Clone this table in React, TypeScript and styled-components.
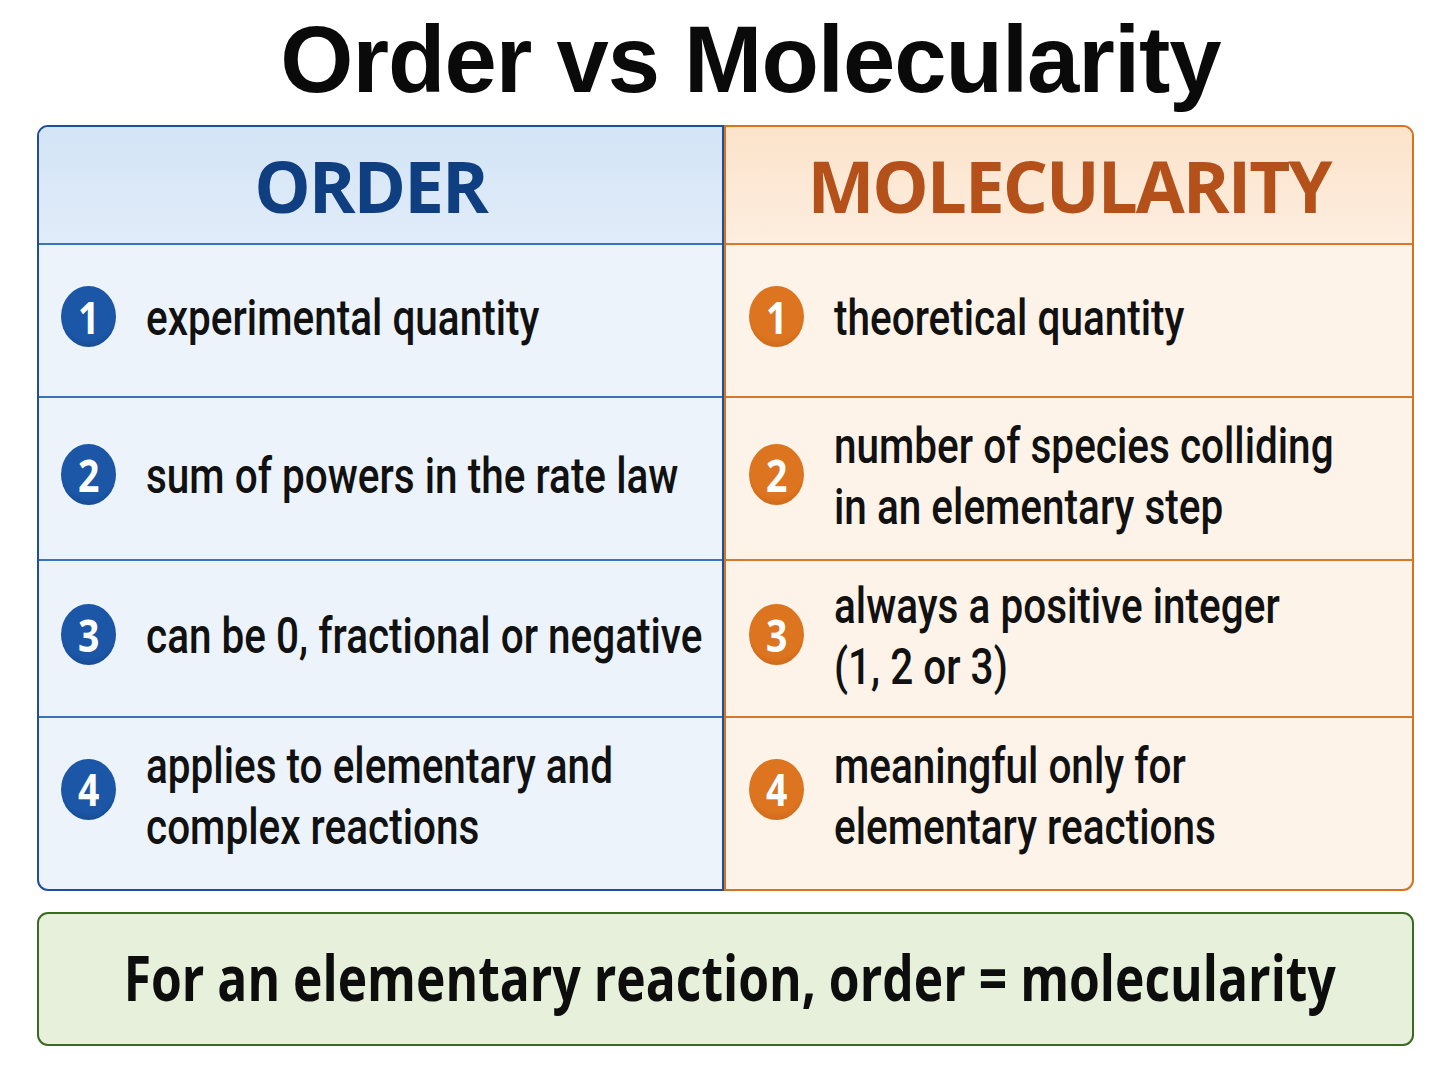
import styled, { createGlobalStyle } from 'styled-components';

const GlobalStyle = createGlobalStyle`
  html, body {
    margin: 0;
    padding: 0;
    background: #ffffff;
  }
  body {
    font-family: "Open Sans", "Liberation Sans", sans-serif;
    color: #111111;
  }
`;

const SANS = `"Open Sans", "Liberation Sans", sans-serif`;
const BODY = `Roboto, "Liberation Sans", sans-serif`;

type Side = 'order' | 'mol';

const palette = {
  order: {
    border: '#1f4f9b',
    line: '#3a73bd',
    headTop: '#d3e4f6',
    headBottom: '#e1ecf9',
    body: '#edf3fb',
    heading: '#0f3f80',
    badge: '#1b56a7',
    badgeEdge: '#12407f',
  },
  mol: {
    border: '#d8721f',
    line: '#d9782a',
    headTop: '#fce3cb',
    headBottom: '#fdeedf',
    body: '#fdf3e8',
    heading: '#b4501a',
    badge: '#dc7420',
    badgeEdge: '#c25e12',
  },
};

// row heights measured between the separator lines
const ROWS = [116, 153, 163, 157, 173];

const Page = styled.div`
  width: 1448px;
  height: 1086px;
  box-sizing: border-box;
  padding: 13px 34px 0 37px;
  display: flex;
  flex-direction: column;
`;

const Title = styled.h1`
  margin: 0 0 18px;
  padding-left: 50px;
  font-family: "Liberation Sans", Arial, sans-serif;
  font-weight: 700;
  font-size: 94px;
  line-height: 94px;
  letter-spacing: -1px;
  text-align: center;
  color: #0a0a0a;
`;

const Table = styled.div`
  display: grid;
  grid-template-columns: 687px 690px;
`;

const Panel = styled.div<{ $side: Side }>`
  display: grid;
  grid-template-rows: ${ROWS.map((h) => `${h}px`).join(' ')};
  border: 2px solid ${(p) => palette[p.$side].border};
  border-radius: ${(p) => (p.$side === 'order' ? '11px 0 0 11px' : '0 11px 11px 0')};
  background: ${(p) => palette[p.$side].body};
  overflow: hidden;
`;

const Head = styled.div<{ $side: Side }>`
  display: flex;
  align-items: center;
  justify-content: center;
  padding: 1px ${(p) => (p.$side === 'order' ? '20px' : '0')} 0 0;
  background: linear-gradient(
    180deg,
    ${(p) => palette[p.$side].headTop},
    ${(p) => palette[p.$side].headBottom}
  );
  font-family: ${SANS};
  font-weight: 700;
  font-size: 71px;
  letter-spacing: -2px;
  color: ${(p) => palette[p.$side].heading};
`;

const Item = styled.div<{ $side: Side }>`
  display: flex;
  align-items: center;
  gap: 30px;
  padding-left: ${(p) => (p.$side === 'order' ? '22px' : '23px')};
  border-top: 2px solid ${(p) => palette[p.$side].line};
  min-width: 0;
`;

const Badge = styled.span<{ $side: Side; $last: boolean }>`
  flex: none;
  width: 55px;
  height: 61px;
  margin-bottom: ${(p) => (p.$last ? '29px' : '8px')};
  border-radius: 50%;
  display: flex;
  align-items: center;
  justify-content: center;
  background: radial-gradient(
    circle at 50% 45%,
    ${(p) => palette[p.$side].badge} 60%,
    ${(p) => palette[p.$side].badgeEdge} 100%
  );
`;

const Digit = styled.span`
  font-family: ${SANS};
  font-weight: 700;
  font-size: 44px;
  line-height: 1;
  color: #ffffff;
  transform: scaleX(0.85);
`;

// the reference uses a condensed face; squeeze Roboto to the same set width
const Text = styled.div<{ $last: boolean }>`
  flex: none;
  width: 540px;
  white-space: nowrap;
  font-family: ${BODY};
  font-weight: 500;
  font-size: 50px;
  line-height: 61px;
  color: #111111;
  padding-bottom: ${(p) => (p.$last ? '13px' : '4px')};
  transform: scaleX(0.81);
  transform-origin: left center;
`;

const Summary = styled.div`
  margin-top: 21px;
  height: 134px;
  box-sizing: border-box;
  border: 2px solid #3d6a23;
  border-radius: 11px;
  background: #e6f0da;
  display: flex;
  align-items: center;
  justify-content: center;
  padding: 0 0 4px 9px;
  overflow: hidden;
`;

const SummaryText = styled.span`
  flex: none;
  white-space: nowrap;
  font-family: ${SANS};
  font-weight: 700;
  font-size: 62px;
  color: #0d0d0d;
  transform: scaleX(0.803);
`;

const columns: { side: Side; title: string; items: string[][] }[] = [
  {
    side: 'order',
    title: 'ORDER',
    items: [
      ['experimental quantity'],
      ['sum of powers in the rate law'],
      ['can be 0, fractional or negative'],
      ['applies to elementary and', 'complex reactions'],
    ],
  },
  {
    side: 'mol',
    title: 'MOLECULARITY',
    items: [
      ['theoretical quantity'],
      ['number of species colliding', 'in an elementary step'],
      ['always a positive integer', '(1, 2 or 3)'],
      ['meaningful only for', 'elementary reactions'],
    ],
  },
];

export default function App() {
  return (
    <>
      <GlobalStyle />
      <Page>
        <Title>Order vs Molecularity</Title>
        <Table>
          {columns.map((col) => (
            <Panel key={col.side} $side={col.side}>
              <Head $side={col.side}>{col.title}</Head>
              {col.items.map((lines, i) => {
                const last = i === col.items.length - 1;
                return (
                  <Item key={i} $side={col.side}>
                    <Badge $side={col.side} $last={last}>
                      <Digit>{i + 1}</Digit>
                    </Badge>
                    <Text $last={last}>
                      {lines.map((l, j) => (
                        <div key={j}>{l}</div>
                      ))}
                    </Text>
                  </Item>
                );
              })}
            </Panel>
          ))}
        </Table>
        <Summary>
          <SummaryText>For an elementary reaction, order = molecularity</SummaryText>
        </Summary>
      </Page>
    </>
  );
}
